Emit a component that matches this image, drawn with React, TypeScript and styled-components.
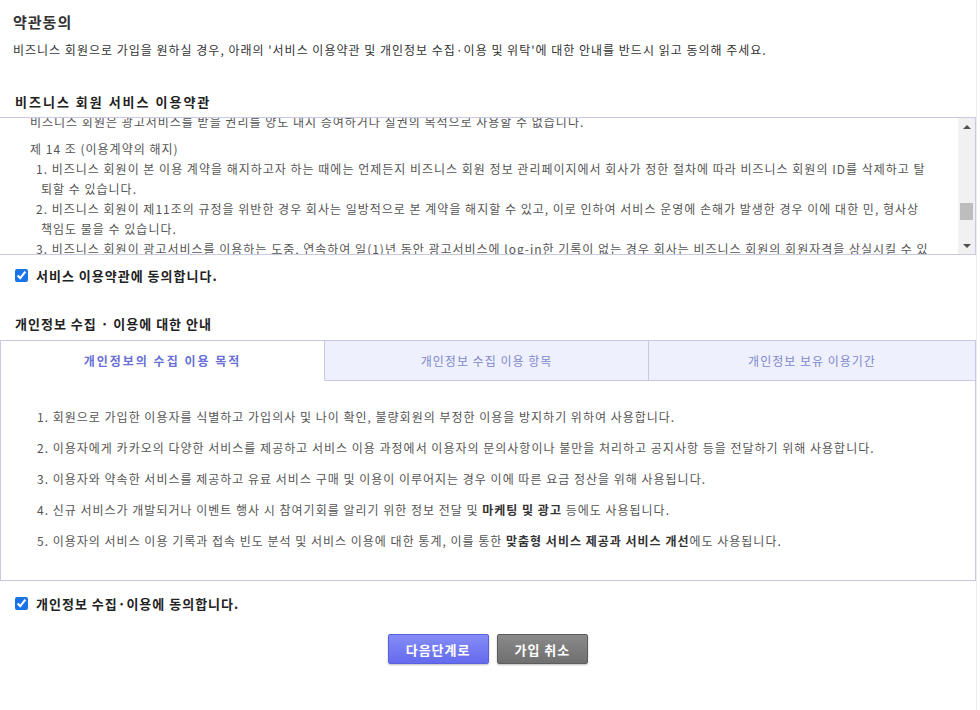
import styled, { createGlobalStyle } from "styled-components";

const GlobalStyle = createGlobalStyle`
  body {
    margin: 0;
    background: #fff;
    font-family: "Noto Sans CJK KR", "Noto Sans", sans-serif;
    font-size: 12px;
    letter-spacing: 1px;
    color: #333;
  }
`;

const purposes: { text: string; strong?: string; tail?: string }[] = [
  { text: "회원으로 가입한 이용자를 식별하고 가입의사 및 나이 확인, 불량회원의 부정한 이용을 방지하기 위하여 사용합니다." },
  { text: "이용자에게 카카오의 다양한 서비스를 제공하고 서비스 이용 과정에서 이용자의 문의사항이나 불만을 처리하고 공지사항 등을 전달하기 위해 사용합니다." },
  { text: "이용자와 약속한 서비스를 제공하고 유료 서비스 구매 및 이용이 이루어지는 경우 이에 따른 요금 정산을 위해 사용됩니다." },
  { text: "신규 서비스가 개발되거나 이벤트 행사 시 참여기회를 알리기 위한 정보 전달 및 ", strong: "마케팅 및 광고", tail: " 등에도 사용됩니다." },
  { text: "이용자의 서비스 이용 기록과 접속 빈도 분석 및 서비스 이용에 대한 통계, 이를 통한 ", strong: "맞춤형 서비스 제공과 서비스 개선", tail: "에도 사용됩니다." },
];

const terms: [string, string][] = [
  [
    "비즈니스 회원이 본 이용 계약을 해지하고자 하는 때에는 언제든지 비즈니스 회원 정보 관리페이지에서 회사가 정한 절차에 따라 비즈니스 회원의 ID를 삭제하고 탈",
    "퇴할 수 있습니다.",
  ],
  [
    "비즈니스 회원이 제11조의 규정을 위반한 경우 회사는 일방적으로 본 계약을 해지할 수 있고, 이로 인하여 서비스 운영에 손해가 발생한 경우 이에 대한 민, 형사상",
    "책임도 물을 수 있습니다.",
  ],
  [
    "비즈니스 회원이 광고서비스를 이용하는 도중, 연속하여 일(1)년 동안 광고서비스에 log-in한 기록이 없는 경우 회사는 비즈니스 회원의 회원자격을 상실시킬 수 있",
    "습니다.",
  ],
];

const tabs = ["개인정보의 수집 이용 목적", "개인정보 수집 이용 항목", "개인정보 보유 이용기간"];

export default function App() {
  return (
    <>
      <GlobalStyle />
      <Page>
        <Title>약관동의</Title>
        <Lead>
          비즈니스 회원으로 가입을 원하실 경우, 아래의 '서비스 이용약관 및 개인정보 수집·이용 및 위탁'에 대한 안내를
          반드시 읽고 동의해 주세요.
        </Lead>

        <SectionTitle $top={32} $spacing={2}>
          비즈니스 회원 서비스 이용약관
        </SectionTitle>
        <TermsBox>
          <TermsText>
            <Para>비즈니스 회원은 광고서비스를 받을 권리를 양도 내지 증여하거나 질권의 목적으로 사용할 수 없습니다.</Para>
            <Para>제 14 조 (이용계약의 해지)</Para>
            {terms.map(([first, second], i) => (
              <TermItem key={i}>
                {i + 1}. {first}
                <br />
                {second}
              </TermItem>
            ))}
          </TermsText>
          <ScrollBar>
            <ArrowButton>
              <Arrow $dir="up" />
            </ArrowButton>
            <Track>
              <Thumb />
            </Track>
            <ArrowButton>
              <Arrow $dir="down" />
            </ArrowButton>
          </ScrollBar>
        </TermsBox>
        <AgreeRow $top={10}>
          <CheckBox type="checkbox" defaultChecked />
          <span>서비스 이용약관에 동의합니다.</span>
        </AgreeRow>

        <SectionTitle $top={29} $spacing={1}>
          개인정보 수집 · 이용에 대한 안내
        </SectionTitle>
        <TabBar>
          {tabs.map((t, i) => (
            <Tab key={t} $active={i === 0}>
              {t}
            </Tab>
          ))}
        </TabBar>
        <TabPanel>
          {purposes.map((p, i) => (
            <PurposeItem key={i}>
              {i + 1}. {p.text}
              {p.strong && <Strong>{p.strong}</Strong>}
              {p.tail}
            </PurposeItem>
          ))}
        </TabPanel>
        <AgreeRow $top={12}>
          <CheckBox type="checkbox" defaultChecked />
          <span>개인정보 수집·이용에 동의합니다.</span>
        </AgreeRow>

        <ButtonRow>
          <Button $variant="primary">다음단계로</Button>
          <Button $variant="cancel">가입 취소</Button>
        </ButtonRow>
      </Page>
    </>
  );
}

const Page = styled.div`
  width: 977px;
  min-height: 710px;
  box-sizing: border-box;
  border-right: 1px solid #ececec;
  display: flex;
  flex-direction: column;
`;

const Title = styled.h1`
  margin: 12px 0 0 13px;
  font-size: 15px;
  line-height: 20px;
  font-weight: bold;
  color: #333;
`;

const Lead = styled.p`
  margin: 8px 0 0 13px;
  line-height: 20px;
  color: #333;
`;

const SectionTitle = styled.h2<{ $top: number; $spacing: number }>`
  margin: ${(p) => p.$top}px 0 0 15px;
  font-size: 13px;
  line-height: 20px;
  font-weight: bold;
  letter-spacing: ${(p) => p.$spacing}px;
  color: #222;
`;

const TermsBox = styled.div`
  margin-top: 5px;
  height: 138px;
  box-sizing: border-box;
  border: 1px solid #c9c9e3;
  border-left: none;
  display: flex;
`;

const TermsText = styled.div`
  flex: 1;
  overflow: hidden;
  padding-left: 30px;
  color: #555;
  line-height: 20px;
  white-space: nowrap;
`;

const Para = styled.p`
  margin: 0;
  &:first-child {
    margin: -6px 0 7px;
  }
`;

const TermItem = styled.p`
  margin: 0;
  padding-left: 11px;
  text-indent: -5px;
`;

const ScrollBar = styled.div`
  width: 17px;
  flex: none;
  background: #f1f1f1;
  display: flex;
  flex-direction: column;
`;

const ArrowButton = styled.div`
  height: 17px;
  display: flex;
  align-items: center;
  justify-content: center;
`;

const Arrow = styled.span<{ $dir: "up" | "down" }>`
  width: 0;
  height: 0;
  border-left: 4px solid transparent;
  border-right: 4px solid transparent;
  ${(p) => (p.$dir === "up" ? "border-bottom: 4px solid #505050;" : "border-top: 4px solid #505050;")}
`;

const Track = styled.div`
  flex: 1;
  padding-top: 68px;
  display: flex;
  justify-content: center;
`;

const Thumb = styled.div`
  width: 13px;
  height: 17px;
  background: #bdbdbd;
`;

const AgreeRow = styled.label<{ $top: number }>`
  margin: ${(p) => p.$top}px 0 0 15px;
  display: flex;
  align-items: center;
  gap: 8px;
  height: 20px;
  font-size: 13px;
  font-weight: bold;
  color: #222;
`;

const CheckBox = styled.input`
  margin: 0;
  width: 13px;
  height: 13px;
  accent-color: #1a73e8;
`;

const TabBar = styled.div`
  margin-top: 6px;
  display: grid;
  grid-template-columns: 324px 324px 1fr;
  border-left: 1px solid #c9c9e3;
`;

const Tab = styled.div<{ $active: boolean }>`
  height: 41px;
  box-sizing: border-box;
  display: flex;
  align-items: center;
  justify-content: center;
  border-top: 1px solid #c9c9e3;
  border-right: 1px solid #c9c9e3;
  border-bottom: 1px solid ${(p) => (p.$active ? "#fff" : "#c9c9e3")};
  background: ${(p) => (p.$active ? "#fff" : "#eff0fd")};
  color: ${(p) => (p.$active ? "#6970d6" : "#8088cc")};
  font-weight: ${(p) => (p.$active ? "bold" : "normal")};
  letter-spacing: ${(p) => (p.$active ? "2px" : "1px")};
`;

const TabPanel = styled.div`
  height: 200px;
  box-sizing: border-box;
  padding: 26px 0 0 36px;
  border: 1px solid #c9c9e3;
  border-top: none;
  display: flex;
  flex-direction: column;
  gap: 11px;
`;

const PurposeItem = styled.p`
  margin: 0;
  line-height: 20px;
  color: #555;
`;

const Strong = styled.strong`
  color: #333;
`;

const ButtonRow = styled.div`
  margin-top: 21px;
  display: flex;
  justify-content: center;
  gap: 8px;
`;

const Button = styled.button<{ $variant: "primary" | "cancel" }>`
  height: 30px;
  padding: 0 17px;
  border-radius: 2px;
  font-family: inherit;
  font-size: 13px;
  font-weight: bold;
  color: #fff;
  letter-spacing: 1px;
  cursor: pointer;
  border: 1px solid ${(p) => (p.$variant === "primary" ? "#5a61da" : "#5c5c5c")};
  background: ${(p) =>
    p.$variant === "primary"
      ? "linear-gradient(#858cf6, #646bee)"
      : "linear-gradient(#8a8a8a, #6f6f6f)"};
  box-shadow: 0 1px 2px rgba(0, 0, 0, 0.25);
`;
